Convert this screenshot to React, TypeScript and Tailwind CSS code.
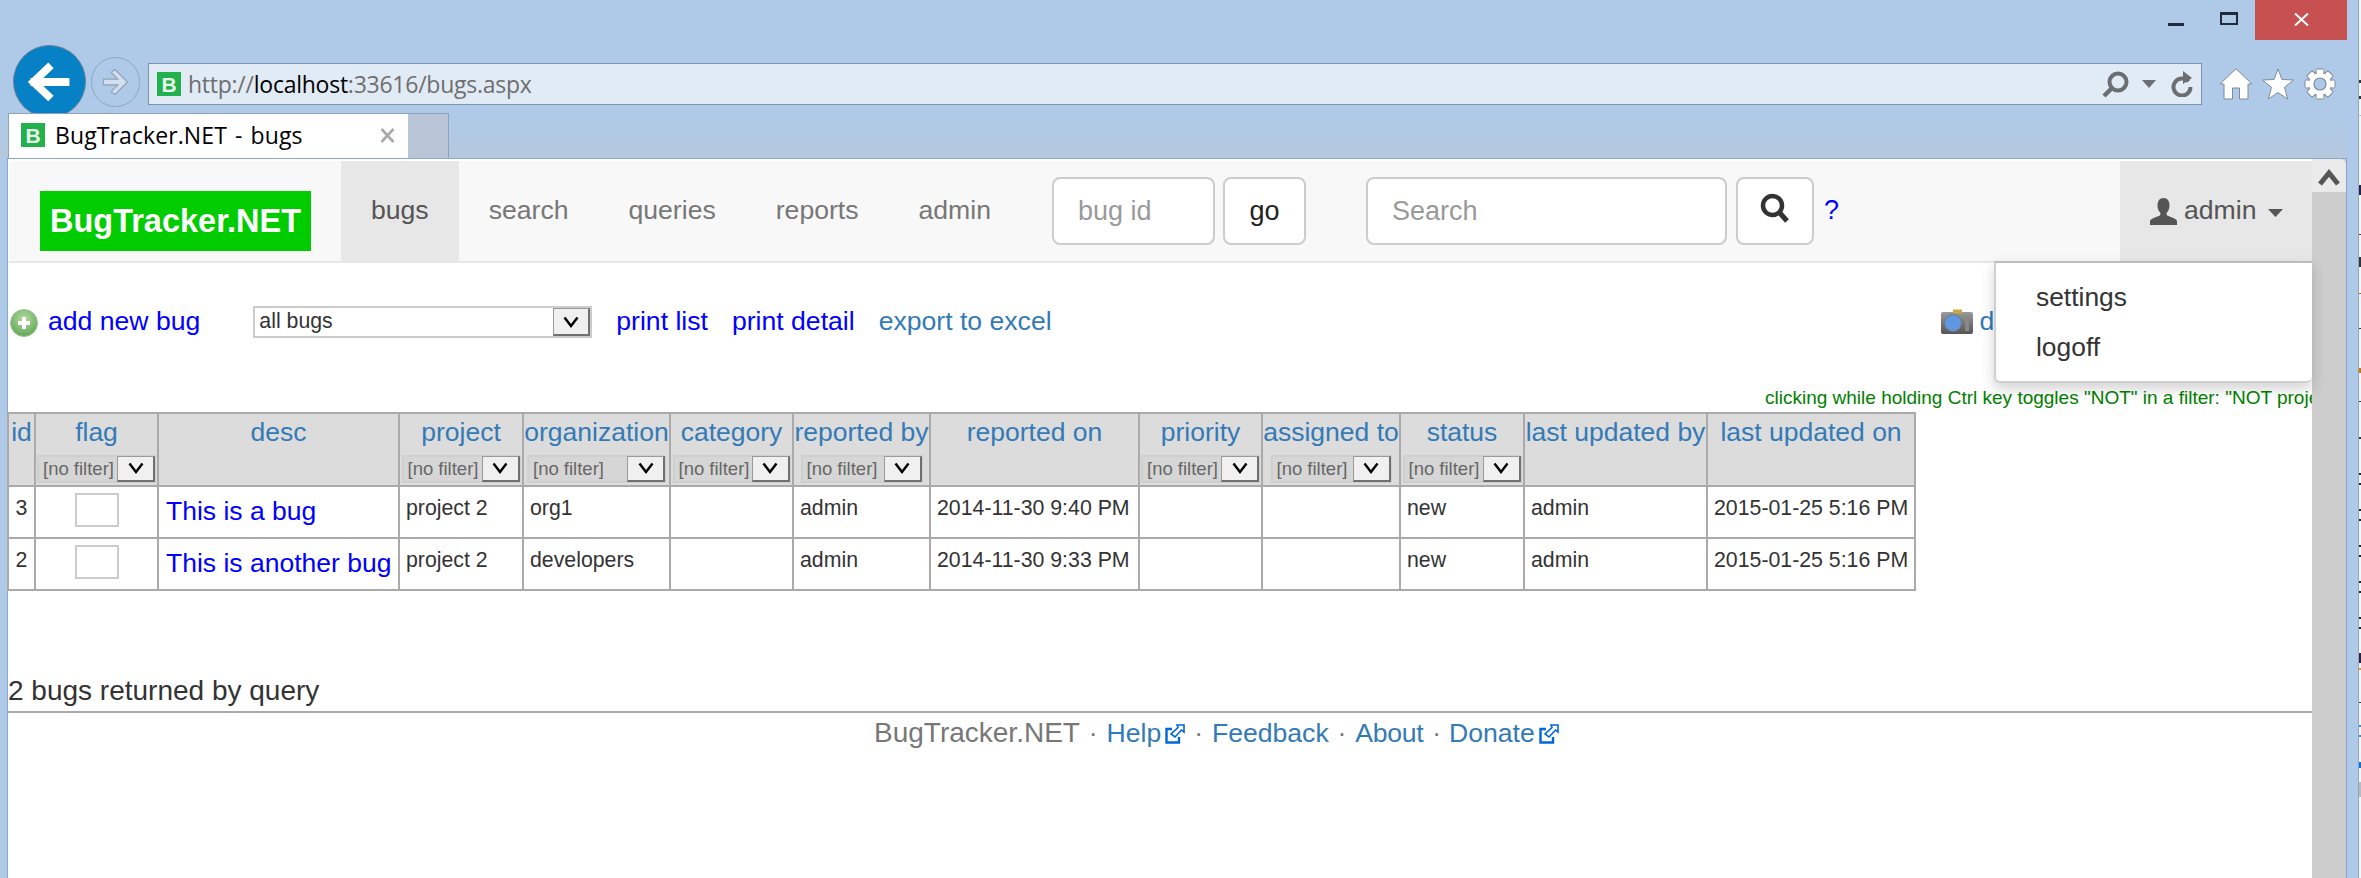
const F = "font-['Liberation_Sans',Arial,sans-serif]";

const cols = [
  { n: "id", w: "w-[27px]" },
  { n: "flag", w: "w-[123px]", f: "w-[119px]" },
  { n: "desc", w: "w-[241px]" },
  { n: "project", w: "w-[124px]", f: "w-[119px]" },
  { n: "organization", w: "w-[147px]", f: "w-[139px]" },
  { n: "category", w: "w-[123px]", f: "w-[118px]" },
  { n: "reported by", w: "w-[137px]", f: "w-[122px]" },
  { n: "reported on", w: "w-[209px]" },
  { n: "priority", w: "w-[123px]", f: "w-[119px]" },
  { n: "assigned to", w: "w-[138px]", f: "w-[121px]" },
  { n: "status", w: "w-[124px]", f: "w-[119px]" },
  { n: "last updated by", w: "w-[183px]" },
  { n: "last updated on", w: "w-[208px]" },
];

const rows = [
  { id: "3", d: "This is a bug", p: "project 2", o: "org1", on: "2014-11-30 9:40 PM" },
  { id: "2", d: "This is another bug", p: "project 2", o: "developers", on: "2014-11-30 9:33 PM" },
];

const ticks: [number, number, string][] = [
  [80, 3, "#333"], [96, 3, "#333"], [115, 1, "#bbb"], [185, 10, "#224"], [234, 1, "#722"],
  [257, 10, "#333"], [293, 1, "#a60"], [328, 1, "#333"], [368, 5, "#c70"], [401, 1, "#333"],
  [437, 2, "#333"], [473, 2, "#222"], [483, 2, "#222"], [509, 2, "#222"], [519, 2, "#222"],
  [545, 2, "#222"], [555, 2, "#222"], [581, 2, "#222"], [591, 2, "#222"], [617, 2, "#222"],
  [627, 2, "#222"], [653, 10, "#302040"], [668, 2, "#e90"], [702, 1, "#333"], [725, 2, "#48c"],
  [735, 2, "#48c"], [762, 6, "#07d"], [782, 15, "#bbb"],
];

function Fav() {
  return (
    <div className="w-[24px] h-[24px] bg-[#22b14c] flex items-center justify-center shrink-0 text-[#e9f6ea] font-bold text-[21px] leading-none font-['Liberation_Sans',sans-serif]">
      B
    </div>
  );
}

function Chevron() {
  return (
    <svg width="18" height="14" viewBox="0 0 18 14">
      <path d="M2.5 2.5 L9 11 L15.5 2.5" fill="none" stroke="#000" strokeWidth="2.4" />
    </svg>
  );
}

function Filter({ w }: { w: string }) {
  return (
    <div className={`${w} mx-auto h-[28px] bg-[#d6d6d6] border-2 border-[#cfcfcf] flex items-center justify-between`}>
      <span className="pl-[4px] text-[18.5px] leading-none text-[#666] whitespace-nowrap">[no filter]</span>
      <span className="w-[38px] h-[26px] -mt-[1px] -mr-[1px] bg-[#f0f0f0] border border-[#9a9a9a] border-r-2 border-b-2 border-r-[#707070] border-b-[#707070] flex items-center justify-center shrink-0">
        <Chevron />
      </span>
    </div>
  );
}

function ExtIcon() {
  return (
    <svg className="inline-block align-baseline ml-[4px] mb-[-2px]" width="20" height="20" viewBox="0 0 20 20">
      <path d="M7 5 H1.5 V18.5 H14 V13" fill="none" stroke="#0066dd" strokeWidth="2.4" />
      <path d="M12 1 H19 V8 L16.5 6 L10 13 L6 10 L13 3.5 Z" fill="#fff" stroke="#0066dd" strokeWidth="1.6" />
    </svg>
  );
}

function Dot() {
  return <span className="mx-[1.5px]"> · </span>;
}

function NavLink({ t, on }: { t: string; on?: boolean }) {
  return (
    <div className={`px-[30px] flex items-center pb-[1px] text-[26.6px] ${on ? "bg-[#e7e7e7] text-[#555]" : "text-[#777]"}`}>{t}</div>
  );
}

function Gear() {
  const a = [0, 45, 90, 135, 180, 225, 270, 315];
  return (
    <svg width="32" height="32" viewBox="0 0 32 32" className="mt-[28px] ml-[10px]">
      {a.map((r) => (
        <rect key={r} x="12" y="1" width="8" height="8" rx="1.5" fill="#fff" stroke="#7d8b9a" strokeWidth="1" transform={`rotate(${r} 16 16)`} />
      ))}
      <circle cx="16" cy="16" r="11.5" fill="#fff" stroke="#7d8b9a" strokeWidth="1" />
      {a.map((r) => (
        <rect key={r} x="13" y="2" width="6" height="9" fill="#fff" transform={`rotate(${r} 16 16)`} />
      ))}
      <circle cx="16" cy="16" r="6" fill="#aecae8" stroke="#7d8b9a" strokeWidth="1.2" />
    </svg>
  );
}

export default function App() {
  return (
    <div className={`relative w-[2361px] h-[878px] overflow-hidden bg-[#aecae8] flex flex-col ${F}`}>
      {/* remnant of the window behind */}
      <div className="absolute right-0 top-0 h-full w-[3px] bg-[#8ea6c0]" />
      <div className="absolute right-0 top-0 h-full w-[2px] bg-[#f6f6f6]">
        {ticks.map(([y, h, c]) => (
          <div key={y} className="absolute left-0 w-[2px]" style={{ top: y, height: h, background: c }} />
        ))}
      </div>

      {/* caption */}
      <div className="h-[40px] flex justify-end pr-[14px] shrink-0">
        <div className="w-[16px] h-[3px] bg-[#1f2b3a] mt-[23px] mr-[36px]" />
        <div className="w-[18px] h-[13px] border-2 border-t-[3px] border-[#1f2b3a] mt-[12px] mr-[17px]" />
        <div className="w-[92px] h-[40px] bg-[#c75050] flex items-center justify-center pb-[2px]">
          <svg width="15" height="13" viewBox="0 0 15 13">
            <path d="M1 0.5 L14 12.5 M14 0.5 L1 12.5" stroke="#fff" strokeWidth="2" />
          </svg>
        </div>
      </div>

      {/* toolbar */}
      <div className="h-[73px] flex items-start pl-[13px] shrink-0">
        <div className="w-[73px] h-[73px] mt-[5px] rounded-full bg-[#0681c5] border border-[#6a7f95] flex items-center justify-center shrink-0">
          <svg width="73" height="73" viewBox="0 0 73 73">
            <path d="M17 37 H57 M38 20 L20 37 L38 54" fill="none" stroke="#fff" strokeWidth="8" />
          </svg>
        </div>
        <div className="w-[49px] h-[50px] ml-[5px] mt-[17px] rounded-full border border-[#8fa7c0] flex items-center justify-center shrink-0">
          <svg width="49" height="50" viewBox="0 0 49 50">
            <path d="M12 22 H27 L20 15 L24 12 L37 25 L24 38 L20 35 L27 28 H12 Z" fill="#d3dfec" stroke="#8fa2b8" strokeWidth="1.2" />
          </svg>
        </div>
        <div className="w-[2054px] h-[42px] ml-[8px] mt-[23px] bg-[#e1ebf6] border border-[#7d93ab] flex items-center pl-[8px] pr-[8px] shrink-0">
          <Fav />
          <div className="ml-[7px] text-[23px] tracking-[-0.25px] font-['Open_Sans',sans-serif] text-[#6e6e6e] whitespace-nowrap">
            http://<span className="text-black">localhost</span>:33616/bugs.aspx
          </div>
          <svg className="ml-auto" width="27" height="27" viewBox="0 0 27 27">
            <circle cx="16" cy="11" r="8.5" fill="none" stroke="#6b6e73" strokeWidth="4" />
            <path d="M9.5 17.5 L2 25" stroke="#6b6e73" strokeWidth="4.5" />
          </svg>
          <svg className="ml-[13px]" width="14" height="8" viewBox="0 0 14 8">
            <path d="M0 0 H14 L7 8 Z" fill="#6b6e73" />
          </svg>
          <svg className="ml-[15px]" width="22" height="26" viewBox="0 0 22 26">
            <path d="M17.5 10.5 A8.5 8.5 0 1 0 19.5 16" fill="none" stroke="#6b6e73" strokeWidth="4" />
            <path d="M12 0 L21 7 L12 13 Z" fill="#6b6e73" />
          </svg>
        </div>
        <svg className="mt-[28px] ml-[17px]" width="34" height="32" viewBox="0 0 34 32">
          <path d="M17 0.8 L33 16 H29 V31 H20.5 V20 H13.5 V31 H5 V16 H1 Z" fill="#fff" stroke="#7d8b9a" strokeWidth="1" />
        </svg>
        <svg className="mt-[28px] ml-[9px]" width="32" height="32" viewBox="0 0 32 32">
          <path d="M16 1 L20 11.5 L31.5 12 L22.5 19.3 L25.6 31 L16 24.5 L6.4 31 L9.5 19.3 L0.5 12 L12 11.5 Z" fill="#fff" stroke="#7d8b9a" strokeWidth="1" />
        </svg>
        <Gear />
      </div>

      {/* tabs */}
      <div className="relative z-10 h-[45px] pl-[8px] flex shrink-0 bg-linear-to-b from-[#aecae8] to-[#b5c8de] mr-[14px]">
        <div className="w-[400px] bg-white border-t border-l border-[#8ca3bd] flex items-center pl-[12px] pb-[2px]">
          <Fav />
          <span className="ml-[10px] text-[23px] tracking-[0.1px] [word-spacing:2px] font-['Open_Sans',sans-serif] text-black whitespace-nowrap">BugTracker.NET - bugs</span>
          <svg className="ml-auto mr-[13px]" width="15" height="15" viewBox="0 0 15 15">
            <path d="M1.5 1 L13.5 14 M13.5 1 L1.5 14" stroke="#a9a9a9" strokeWidth="2.6" />
          </svg>
        </div>
        <div className="w-[41px] bg-[#b8c6d8] border-t border-r border-[#8ca3bd]" />
      </div>

      {/* page */}
      <div className="flex-1 flex pl-[7px] min-h-0">
        <div className="w-[2305px] bg-white border-l border-t border-[#8ca8c7] pt-[2px] flex flex-col shrink-0 relative">
          {/* navbar */}
          <div className="h-[102px] bg-[#f8f8f8] border-b-2 border-[#e7e7e7] rounded-tl-[6px] flex shrink-0 ml-[1px]">
            <div className="w-[271px] h-[60px] ml-[31px] mt-[30px] mr-[30px] bg-[#00cc00] text-white font-bold text-[32.5px] flex items-center justify-center shrink-0">
              BugTracker.NET
            </div>
            <NavLink t="bugs" on />
            <NavLink t="search" />
            <NavLink t="queries" />
            <NavLink t="reports" />
            <NavLink t="admin" />
            <div className="w-[163px] h-[68px] mt-[16px] ml-[31px] bg-white border-2 border-[#ccc] rounded-[8px] flex items-center pl-[24px] text-[27px] text-[#999]">bug id</div>
            <div className="w-[83px] h-[68px] mt-[16px] ml-[8px] bg-white border-2 border-[#ccc] rounded-[8px] flex items-center justify-center text-[27px] text-[#222]">go</div>
            <div className="w-[361px] h-[68px] mt-[16px] ml-[60px] bg-white border-2 border-[#ccc] rounded-[8px] flex items-center pl-[24px] text-[27px] text-[#999]">Search</div>
            <div className="w-[78px] h-[68px] mt-[16px] ml-[9px] bg-white border-2 border-[#ccc] rounded-[8px] flex items-center justify-center pb-[6px]">
              <svg width="30" height="30" viewBox="0 0 30 30">
                <circle cx="12.5" cy="12.5" r="9.5" fill="none" stroke="#333" strokeWidth="4.5" />
                <path d="M19 19 L27 28" stroke="#333" strokeWidth="5" />
              </svg>
            </div>
            <div className="ml-[10px] mt-[31px] text-[27px] leading-[36px] text-[#0000ff]">?</div>
            <div className="relative ml-auto w-[192px] bg-[#e7e7e7] flex items-center pl-[30px] pb-[1px] text-[#555] text-[26.6px]">
              <svg width="27" height="27" viewBox="0 0 27 27" className="mt-[1px]">
                <path d="M13.5 0 C17.5 0 19.5 3 19.5 7.5 C19.5 11 18 13.5 16.5 15 L17 17.5 C21 19 26 20.5 27 23 V27 H0 V23 C1 20.5 6 19 10 17.5 L10.5 15 C9 13.5 7.5 11 7.5 7.5 C7.5 3 9.5 0 13.5 0 Z" fill="#555" />
              </svg>
              <span className="ml-[7px]">admin</span>
              <svg className="ml-[12px] mt-[4px]" width="15" height="8" viewBox="0 0 15 8">
                <path d="M0 0 H15 L7.5 8 Z" fill="#555" />
              </svg>
              {/* menu */}
              <div className="absolute right-0 top-[100px] z-20 w-[318px] h-[122px] bg-white border-2 border-t-[2px] border-r-0 border-[#cfcfcf] border-t-[#bdbdbd] rounded-b-[6px] shadow-[0_6px_14px_rgba(0,0,0,0.18)] pt-[10px] text-[#333] text-[26.4px]">
                <div className="h-[50px] pl-[40px] flex items-center">settings</div>
                <div className="h-[50px] pl-[40px] flex items-center">logoff</div>
              </div>
            </div>
          </div>

          {/* actions */}
          <div className="mt-[43px] h-[32px] flex items-center shrink-0 text-[26.6px] whitespace-nowrap pl-[2px]">
            <svg width="28" height="28" viewBox="0 0 28 28" className="mt-[2px] shrink-0">
              <defs>
                <radialGradient id="gr" cx="50%" cy="35%" r="65%">
                  <stop offset="0%" stopColor="#b6dca0" />
                  <stop offset="100%" stopColor="#5fa855" />
                </radialGradient>
              </defs>
              <circle cx="14" cy="14" r="13.5" fill="url(#gr)" stroke="#9cc09a" />
              <path d="M14 8 V20 M8 14 H20" stroke="#fff" strokeWidth="4" />
            </svg>
            <span className="ml-[10px] text-[#0000ff]">add new bug</span>
            <div className="ml-[53px] w-[339px] h-[32px] border-2 border-[#ccc] bg-white flex items-center justify-between shrink-0">
              <span className="pl-[4px] text-[21.3px] text-[#333]">all bugs</span>
              <span className="w-[37px] h-[28px] bg-[#f0f0f0] border border-[#9a9a9a] border-r-2 border-b-2 border-r-[#707070] border-b-[#707070] flex items-center justify-center">
                <Chevron />
              </span>
            </div>
            <span className="ml-[24px] text-[#0000ff]">print list</span>
            <span className="ml-[24px] text-[#0000ff]">print detail</span>
            <span className="ml-[24px] text-[#337ab7]">export to excel</span>
            <svg width="32" height="26" viewBox="0 0 32 26" className="ml-[889px] shrink-0">
              <defs>
                <linearGradient id="cam" x1="0" y1="0" x2="0" y2="1">
                  <stop offset="0%" stopColor="#9a9a9a" />
                  <stop offset="100%" stopColor="#555" />
                </linearGradient>
              </defs>
              <rect x="0" y="3" width="32" height="22" rx="2" fill="url(#cam)" />
              <rect x="12" y="0.5" width="9" height="4" fill="#c9a84a" />
              <circle cx="12" cy="14" r="8.5" fill="#5f97e0" stroke="#777" />
              <rect x="24" y="7" width="4" height="15" fill="#888" />
            </svg>
            <span className="ml-[7px] text-[#337ab7]">d</span>
          </div>

          {/* hint */}
          <div className="mt-[49px] h-[22px] pl-[1757px] overflow-hidden whitespace-nowrap text-[19px] leading-[22px] text-[#008000] shrink-0">
            clicking while holding Ctrl key toggles &quot;NOT&quot; in a filter: &quot;NOT project 1&quot;
          </div>

          {/* table */}
          <table className="mt-[3px] -ml-[1px] table-fixed border-collapse w-[1909px] shrink-0">
            <colgroup>
              {cols.map((c) => (
                <col key={c.n} className={c.w} />
              ))}
            </colgroup>
            <thead>
              <tr>
                {cols.map((c) => (
                  <th key={c.n} className="h-[73px] p-0 align-top bg-[#dcdcdc] border-2 border-[#aaa] font-normal text-center">
                    <div className="h-[41px] text-[26.5px] leading-[36px] text-[#337ab7] whitespace-nowrap">{c.n}</div>
                    {c.f && <Filter w={c.f} />}
                  </th>
                ))}
              </tr>
            </thead>
            <tbody>
              {rows.map((r) => (
                <tr key={r.id} className="text-[21.3px] text-[#333]">
                  <td className="h-[52px] p-0 border-2 border-[#aaa] align-top text-center pt-[6px] leading-[30px]">{r.id}</td>
                  <td className="h-[52px] p-0 border-2 border-[#aaa] align-top">
                    <div className="w-[44px] h-[34px] mx-auto mt-[6px] border-2 border-[#ccc] bg-white" />
                  </td>
                  <td className="h-[52px] p-0 border-2 border-[#aaa] align-top pl-[7px] pt-[6px] text-[26.5px] leading-[36px] text-[#0000ff] whitespace-nowrap">{r.d}</td>
                  <td className="h-[52px] p-0 border-2 border-[#aaa] align-top pl-[6px] pt-[6px] leading-[30px] whitespace-nowrap">{r.p}</td>
                  <td className="h-[52px] p-0 border-2 border-[#aaa] align-top pl-[6px] pt-[6px] leading-[30px] whitespace-nowrap">{r.o}</td>
                  <td className="h-[52px] p-0 border-2 border-[#aaa]" />
                  <td className="h-[52px] p-0 border-2 border-[#aaa] align-top pl-[6px] pt-[6px] leading-[30px]">admin</td>
                  <td className="h-[52px] p-0 border-2 border-[#aaa] align-top pl-[6px] pt-[6px] leading-[30px] whitespace-nowrap">{r.on}</td>
                  <td className="h-[52px] p-0 border-2 border-[#aaa]" />
                  <td className="h-[52px] p-0 border-2 border-[#aaa]" />
                  <td className="h-[52px] p-0 border-2 border-[#aaa] align-top pl-[6px] pt-[6px] leading-[30px]">new</td>
                  <td className="h-[52px] p-0 border-2 border-[#aaa] align-top pl-[6px] pt-[6px] leading-[30px]">admin</td>
                  <td className="h-[52px] p-0 border-2 border-[#aaa] align-top pl-[6px] pt-[6px] leading-[30px] whitespace-nowrap">2015-01-25 5:16 PM</td>
                </tr>
              ))}
            </tbody>
          </table>

          <div className="mt-[82px] h-[38px] text-[28px] leading-[36px] text-[#333] shrink-0">2 bugs returned by query</div>
          <div className="h-[2px] bg-[#aaa] shrink-0" />
          <div className="pl-[866px] h-[42px] text-[26.6px] leading-[40px] text-[#777] whitespace-nowrap shrink-0">
            <span className="text-[28px]">BugTracker.NET</span>
            <Dot />
            <span className="text-[#337ab7]">Help</span>
            <ExtIcon />
            <Dot />
            <span className="text-[#337ab7]">Feedback</span>
            <Dot />
            <span className="text-[#337ab7] tracking-[-0.3px]">About</span>
            <Dot />
            <span className="text-[#337ab7] -ml-[1px]">Donate</span>
            <ExtIcon />
          </div>
        </div>

        {/* scrollbar */}
        <div className="w-[34px] bg-[#cdcdcd] shrink-0 border-t border-[#8ca8c7]">
          <div className="h-[33px] bg-[#eaeaea] rounded-tr-[6px] flex items-center justify-center">
            <svg width="22" height="17" viewBox="0 0 22 17" className="mt-[3px]">
              <path d="M2 15 L11 4 L20 15" fill="none" stroke="#555" strokeWidth="5" />
            </svg>
          </div>
        </div>
        <div className="w-[1px] bg-[#8ca3bd] shrink-0" />
      </div>
    </div>
  );
}
